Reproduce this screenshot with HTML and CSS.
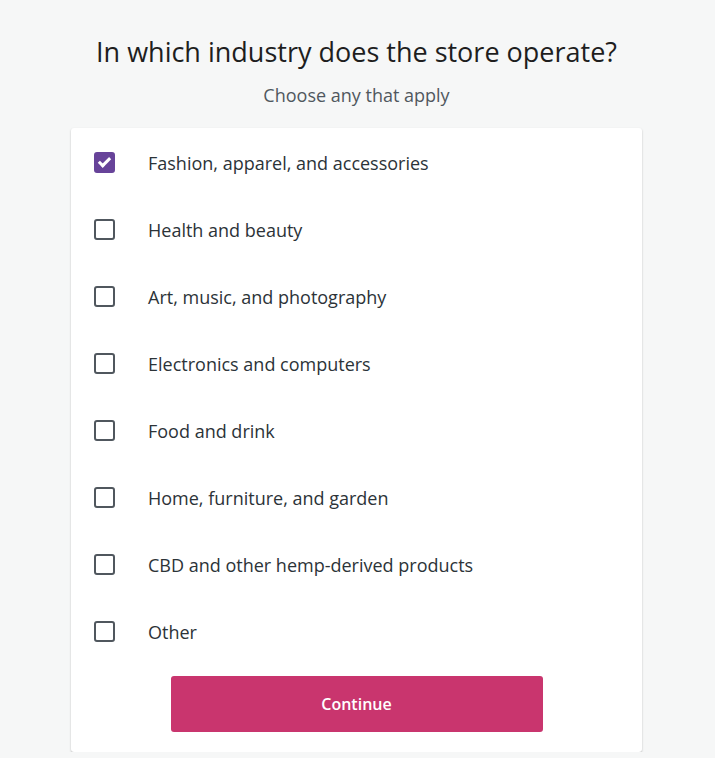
FILE: index.html
```html
<!DOCTYPE html>
<html lang="en">
<head>
    <meta charset="UTF-8">
    <meta name="viewport" content="width=device-width, initial-scale=1.0">
    <title>Store industry</title>
    <link rel="stylesheet" href="styles.css">
</head>
<body>
    <div class="page">
        <h1 class="title">In which industry does the store operate?</h1>
        <p class="subtitle">Choose any that apply</p>

        <div class="card">
            <label class="option">
                <input type="checkbox" checked>
                <span class="box"></span>
                <span class="label">Fashion, apparel, and accessories</span>
            </label>
            <label class="option">
                <input type="checkbox">
                <span class="box"></span>
                <span class="label">Health and beauty</span>
            </label>
            <label class="option">
                <input type="checkbox">
                <span class="box"></span>
                <span class="label">Art, music, and photography</span>
            </label>
            <label class="option">
                <input type="checkbox">
                <span class="box"></span>
                <span class="label">Electronics and computers</span>
            </label>
            <label class="option">
                <input type="checkbox">
                <span class="box"></span>
                <span class="label">Food and drink</span>
            </label>
            <label class="option">
                <input type="checkbox">
                <span class="box"></span>
                <span class="label">Home, furniture, and garden</span>
            </label>
            <label class="option">
                <input type="checkbox">
                <span class="box"></span>
                <span class="label">CBD and other hemp-derived products</span>
            </label>
            <label class="option">
                <input type="checkbox">
                <span class="box"></span>
                <span class="label">Other</span>
            </label>

            <button class="continue">Continue</button>
        </div>
    </div>
</body>
</html>
```

FILE: styles.css
```css
/* Page */
body {
    margin: 0;
    background-color: #f6f7f7;
    color: #1e1e1e;
    font-family: 'Open Sans', 'Noto Sans', sans-serif;
}

.page {
    display: flex;
    flex-direction: column;
    align-items: center;
    padding: 34px 2px 0 0;
}

/* Heading */
.title {
    margin: 0;
    font-size: 27px;
    line-height: 36px;
    font-weight: 400;
    color: #1e1e1e;
}

.subtitle {
    margin: 13px 0 21px;
    font-size: 18px;
    line-height: 24px;
    color: #50575e;
}

/* Card */
.card {
    width: 571px;
    box-sizing: border-box;
    background-color: #fff;
    border-radius: 3px;
    box-shadow: 0 1px 2px rgba(0, 0, 0, 0.25);
    padding: 1px 23px 20px;
    display: flex;
    flex-direction: column;
}

.option {
    display: flex;
    align-items: center;
    height: 67px;
    cursor: pointer;
}

.option input {
    display: none;
}

.box {
    width: 17px;
    height: 17px;
    border: 2px solid #50575e;
    border-radius: 3px;
    margin-right: 33px;
    flex-shrink: 0;
    position: relative;
}

.option input:checked + .box {
    background-color: #674399;
    border-color: #674399;
}

.option input:checked + .box::after {
    content: '';
    position: absolute;
    left: 5px;
    top: 1px;
    width: 4px;
    height: 9px;
    border: solid #fff;
    border-width: 0 3px 3px 0;
    transform: rotate(45deg);
}

.label {
    font-size: 18px;
    color: #2c3338;
}

/* Button */
.continue {
    align-self: center;
    margin-top: 11px;
    width: 372px;
    height: 56px;
    border: none;
    border-radius: 3px;
    background-color: #c9356e;
    color: #fff;
    font-family: inherit;
    font-size: 16px;
    font-weight: 600;
    cursor: pointer;
}
```
